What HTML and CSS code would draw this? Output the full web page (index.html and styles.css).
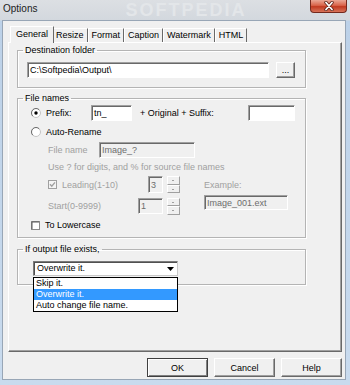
FILE: index.html
```html
<!DOCTYPE html>
<html lang="en">

<head>
    <meta charset="UTF-8">
    <title>Options</title>
    <link rel="stylesheet" href="styles.css">
</head>

<body>
    <div class="window">
        <div class="titlebar">
            <span class="title">Options</span>
            <span class="wm">SOFTPEDIA</span>
            <span class="close">
                <svg width="14" height="10" viewBox="0 0 14 10">
                    <path d="M4 1.5 L10 8.5 M10 1.5 L4 8.5" stroke="#5a2218" stroke-width="3.4" stroke-linecap="round"/>
                    <path d="M4 1.5 L10 8.5 M10 1.5 L4 8.5" stroke="#fff" stroke-width="1.8" stroke-linecap="round"/>
                </svg>
            </span>
        </div>

        <div class="client">
            <div class="tabs">
                <span class="tab active">General</span>
                <span class="tab">Resize</span>
                <span class="tab">Format</span>
                <span class="tab">Caption</span>
                <span class="tab">Watermark</span>
                <span class="tab">HTML</span>
            </div>

            <div class="pane">
                <!-- destination -->
                <fieldset class="group">
                    <legend>Destination folder</legend>
                    <div class="dest-row">
                        <span class="edit dest-edit">C:\Softpedia\Output\</span>
                        <span class="btn browse">...</span>
                    </div>
                </fieldset>

                <!-- file names -->
                <fieldset class="group names">
                    <legend>File names</legend>
                    <div class="names-body">
                        <div class="row r-prefix">
                            <span class="opt w-prefix">
                                <svg class="radio" width="10" height="10" viewBox="0 0 10 10">
                                    <circle cx="5" cy="5" r="4.5" fill="#fff" stroke="#c4c4c4"/>
                                    <path d="M1.8 8.2A4.5 4.5 0 0 1 8.2 1.8" stroke="#6d6d6d" fill="none"/>
                                    <circle cx="5" cy="5" r="1.7" fill="#000"/>
                                </svg>
                                Prefix:
                            </span>
                            <span class="edit prefix-edit">tn_</span>
                            <span class="suffix-label">+ Original + Suffix:</span>
                            <span class="edit suffix-edit"></span>
                        </div>

                        <div class="row r-auto">
                            <span class="opt">
                                <svg class="radio" width="10" height="10" viewBox="0 0 10 10">
                                    <circle cx="5" cy="5" r="4.5" fill="#fff" stroke="#c4c4c4"/>
                                    <path d="M1.8 8.2A4.5 4.5 0 0 1 8.2 1.8" stroke="#6d6d6d" fill="none"/>
                                </svg>
                                Auto-Rename
                            </span>
                        </div>

                        <div class="row sub r-fname">
                            <span class="dim w-fname">File name</span>
                            <span class="edit off fname-edit">Image_?</span>
                        </div>

                        <div class="row sub r-hint">
                            <span class="dim">Use ? for digits, and % for source file names</span>
                        </div>

                        <div class="row sub r-lead">
                            <span class="opt dim w-lead">
                                <svg class="check" width="9" height="9" viewBox="0 0 9 9">
                                    <rect x=".5" y=".5" width="8" height="8" fill="#f4f4f4" stroke="#a0a0a0"/>
                                    <path d="M2 4.2 L3.8 6.2 L7 2.4" stroke="#a0a0a0" stroke-width="1.4" fill="none"/>
                                </svg>
                                Leading(1-10)
                            </span>
                            <span class="edit off lead-edit">3</span>
                            <span class="spin"><span class="up"></span><span class="down"></span></span>
                            <span class="dim example-label">Example:</span>
                        </div>

                        <div class="row sub r-start">
                            <span class="dim w-start">Start(0-9999)</span>
                            <span class="edit off start-edit">1</span>
                            <span class="spin"><span class="up"></span><span class="down"></span></span>
                            <span class="edit off example-edit">Image_001.ext</span>
                        </div>

                        <div class="row r-lower">
                            <span class="opt">
                                <svg class="check" width="9" height="9" viewBox="0 0 9 9">
                                    <rect x=".5" y=".5" width="8" height="8" fill="#fff" stroke="#8a8a8a"/>
                                    <path d="M1 8V1H8" stroke="#5a5a5a" fill="none"/>
                                </svg>
                                To Lowercase
                            </span>
                        </div>
                    </div>
                </fieldset>

                <!-- output exists -->
                <fieldset class="group exists">
                    <legend>If output file exists,</legend>
                    <div class="combo-wrap">
                        <div class="combo">
                            <span class="combo-text">Overwrite it.</span>
                            <span class="combo-btn">
                                <svg width="7" height="4" viewBox="0 0 7 4"><path d="M0 0H7L3.5 4Z" fill="#000"/></svg>
                            </span>
                        </div>
                        <ul class="droplist">
                            <li>Skip it.</li>
                            <li class="sel">Overwrite it.</li>
                            <li>Auto change file name.</li>
                        </ul>
                    </div>
                </fieldset>
            </div>

            <div class="buttons">
                <span class="btn dlg default">OK</span>
                <span class="btn dlg">Cancel</span>
                <span class="btn dlg">Help</span>
            </div>
        </div>
    </div>
</body>

</html>
```

FILE: styles.css
```css
body{margin:0;font-family:"Liberation Sans",Arial,sans-serif;font-size:9px;line-height:12px;color:#000;}
ul{list-style:none;margin:0;padding:0;}

.window{
    width:350px;
    height:385px;
    display:flex;
    flex-direction:column;
    overflow:hidden;
    background:linear-gradient(#dcdfe3 0,#d3d8de 20px,#bcd1e8 21px,#c9dbee 100%);
}

/* title bar */
.titlebar{height:20px;display:flex;align-items:flex-start;flex-shrink:0;}
.title{margin:3px 0 0 3px;font-size:10px;line-height:12px;color:#1b1b1b;}
.wm{margin:1px 0 0 88px;font-size:18px;font-weight:bold;line-height:19px;letter-spacing:2px;color:#e3e6e9;}
.close{
    margin-left:auto;
    margin-right:3px;
    width:37px;
    height:13px;
    box-sizing:border-box;
    border:1px solid #74291d;
    border-top:0;
    border-radius:0 0 4px 4px;
    background:linear-gradient(#eaa896,#d9644a 45%,#c13a20 55%,#d8735a);
    display:flex;
    align-items:center;
    justify-content:center;
}

/* client */
.client{
    margin:0 4px 5px 2px;
    height:360px;
    box-sizing:border-box;
    border:1px solid #98a6b6;
    background:#f0f0f0;
    padding:7px 3px 0 5px;
}

.tabs{display:flex;align-items:flex-end;height:14px;padding-left:4px;}
.tab{
    height:13px;
    padding:0 3px;
    border-top:1px solid #fff;
    border-left:1px solid #fff;
    border-right:1px solid #696969;
    line-height:13px;
}
.tab.active{
    position:relative;
    z-index:1;
    height:16px;
    margin:0 -2px -1px -2px;
    padding:0 5px;
    background:#f0f0f0;
    line-height:14px;
}

.pane{
    height:310px;
    box-sizing:border-box;
    border:1px solid;
    border-color:#fff #696969 #696969 #fff;
    box-shadow:inset -1px -1px #a0a0a0;
    padding:1px 0 0 8px;
}

/* group boxes */
.group{
    width:289px;
    box-sizing:border-box;
    margin:0;
    padding:0;
    border:1px solid #b4b4b4;
    box-shadow:inset 1px 1px #fff,1px 1px #fff;
}
.group legend{margin-left:5px;padding:0 2px;line-height:12px;}
.names{margin-top:4px;}
.exists{margin-top:5px;}

.edit{
    display:flex;
    align-items:center;
    box-sizing:border-box;
    height:16px;
    padding:0 2px;
    background:#fff;
    border:1px solid;
    border-color:#a0a0a0 #fff #fff #a0a0a0;
    box-shadow:inset 1px 1px #696969;
    white-space:nowrap;
}
.edit.off{background:#f0f0f0;color:#6d6d6d;}

.btn{
    display:flex;
    align-items:center;
    justify-content:center;
    box-sizing:border-box;
    border:1px solid;
    border-color:#fff #696969 #696969 #fff;
    box-shadow:inset -1px -1px #a0a0a0;
    background:#f0f0f0;
}

.dest-row{display:flex;margin:6px 0 9px 9px;}
.dest-edit{width:242px;}
.browse{width:19px;height:16px;margin-left:7px;line-height:10px;}

.names-body{padding:1px 0 6px 13px;}
.row{display:flex;align-items:center;height:16px;}
.sub{padding-left:17px;}
.opt{display:flex;align-items:center;white-space:nowrap;}
.radio{margin-right:5px;}
.check{margin-right:5px;}
.dim{color:#a0a0a0;white-space:nowrap;}

.w-prefix{width:60px;}
.prefix-edit{width:41px;}
.suffix-label{width:116px;padding-left:8px;box-sizing:border-box;}
.suffix-edit{width:47px;}

.r-auto{margin-top:3px;}
.r-fname{margin-top:2px;}
.w-fname{width:51px;}
.fname-edit{width:96px;}
.r-hint{margin-top:3px;height:12px;}

.r-lead{margin-top:3px;height:17px;}
.w-lead{width:100px;}
.lead-edit{width:15px;height:17px;}
.spin{display:flex;flex-direction:column;width:13px;height:17px;margin-left:4px;}
.spin span{flex:1;border:1px solid;border-color:#fff #a0a0a0 #a0a0a0 #fff;position:relative;}
.spin span::after{
    content:"";
    position:absolute;
    left:4px;
    top:3px;
    width:2px;
    height:1px;
    background:#a0a0a0;
}
.example-label{margin-left:24px;}

.r-start{margin-top:5px;}
.w-start{width:90px;}
.start-edit{width:25px;}
.example-edit{width:84px;height:15px;margin-left:24px;align-self:flex-start;margin-top:-3px;}

.r-lower{margin-top:5px;height:12px;}

/* combo */
.combo-wrap{position:relative;margin:6px 0 8px 15px;width:145px;}
.combo{
    display:flex;
    height:15px;
    box-sizing:border-box;
    background:#fff;
    border:1px solid;
    border-color:#7a7a7a #c8c8c8 #c8c8c8 #7a7a7a;
    box-shadow:inset 1px 1px #505050;
}
.combo-text{flex:1;padding-left:3px;line-height:13px;}
.combo-btn{display:flex;align-items:center;justify-content:center;width:14px;}
.droplist{
    position:absolute;
    top:16px;
    left:0;
    width:145px;
    box-sizing:border-box;
    background:#fff;
    border:1px solid #000;
    z-index:2;
}
.droplist li{height:11px;line-height:11px;padding-left:2px;}
.droplist .sel{background:#3399ff;color:#fff;}

/* dialog buttons */
.buttons{display:flex;justify-content:flex-end;gap:6px;margin-top:6px;}
.dlg{width:61px;height:19px;}
.dlg.default{border-color:#404040;box-shadow:inset 1px 1px #fff,inset -1px -1px #808080;}
```
